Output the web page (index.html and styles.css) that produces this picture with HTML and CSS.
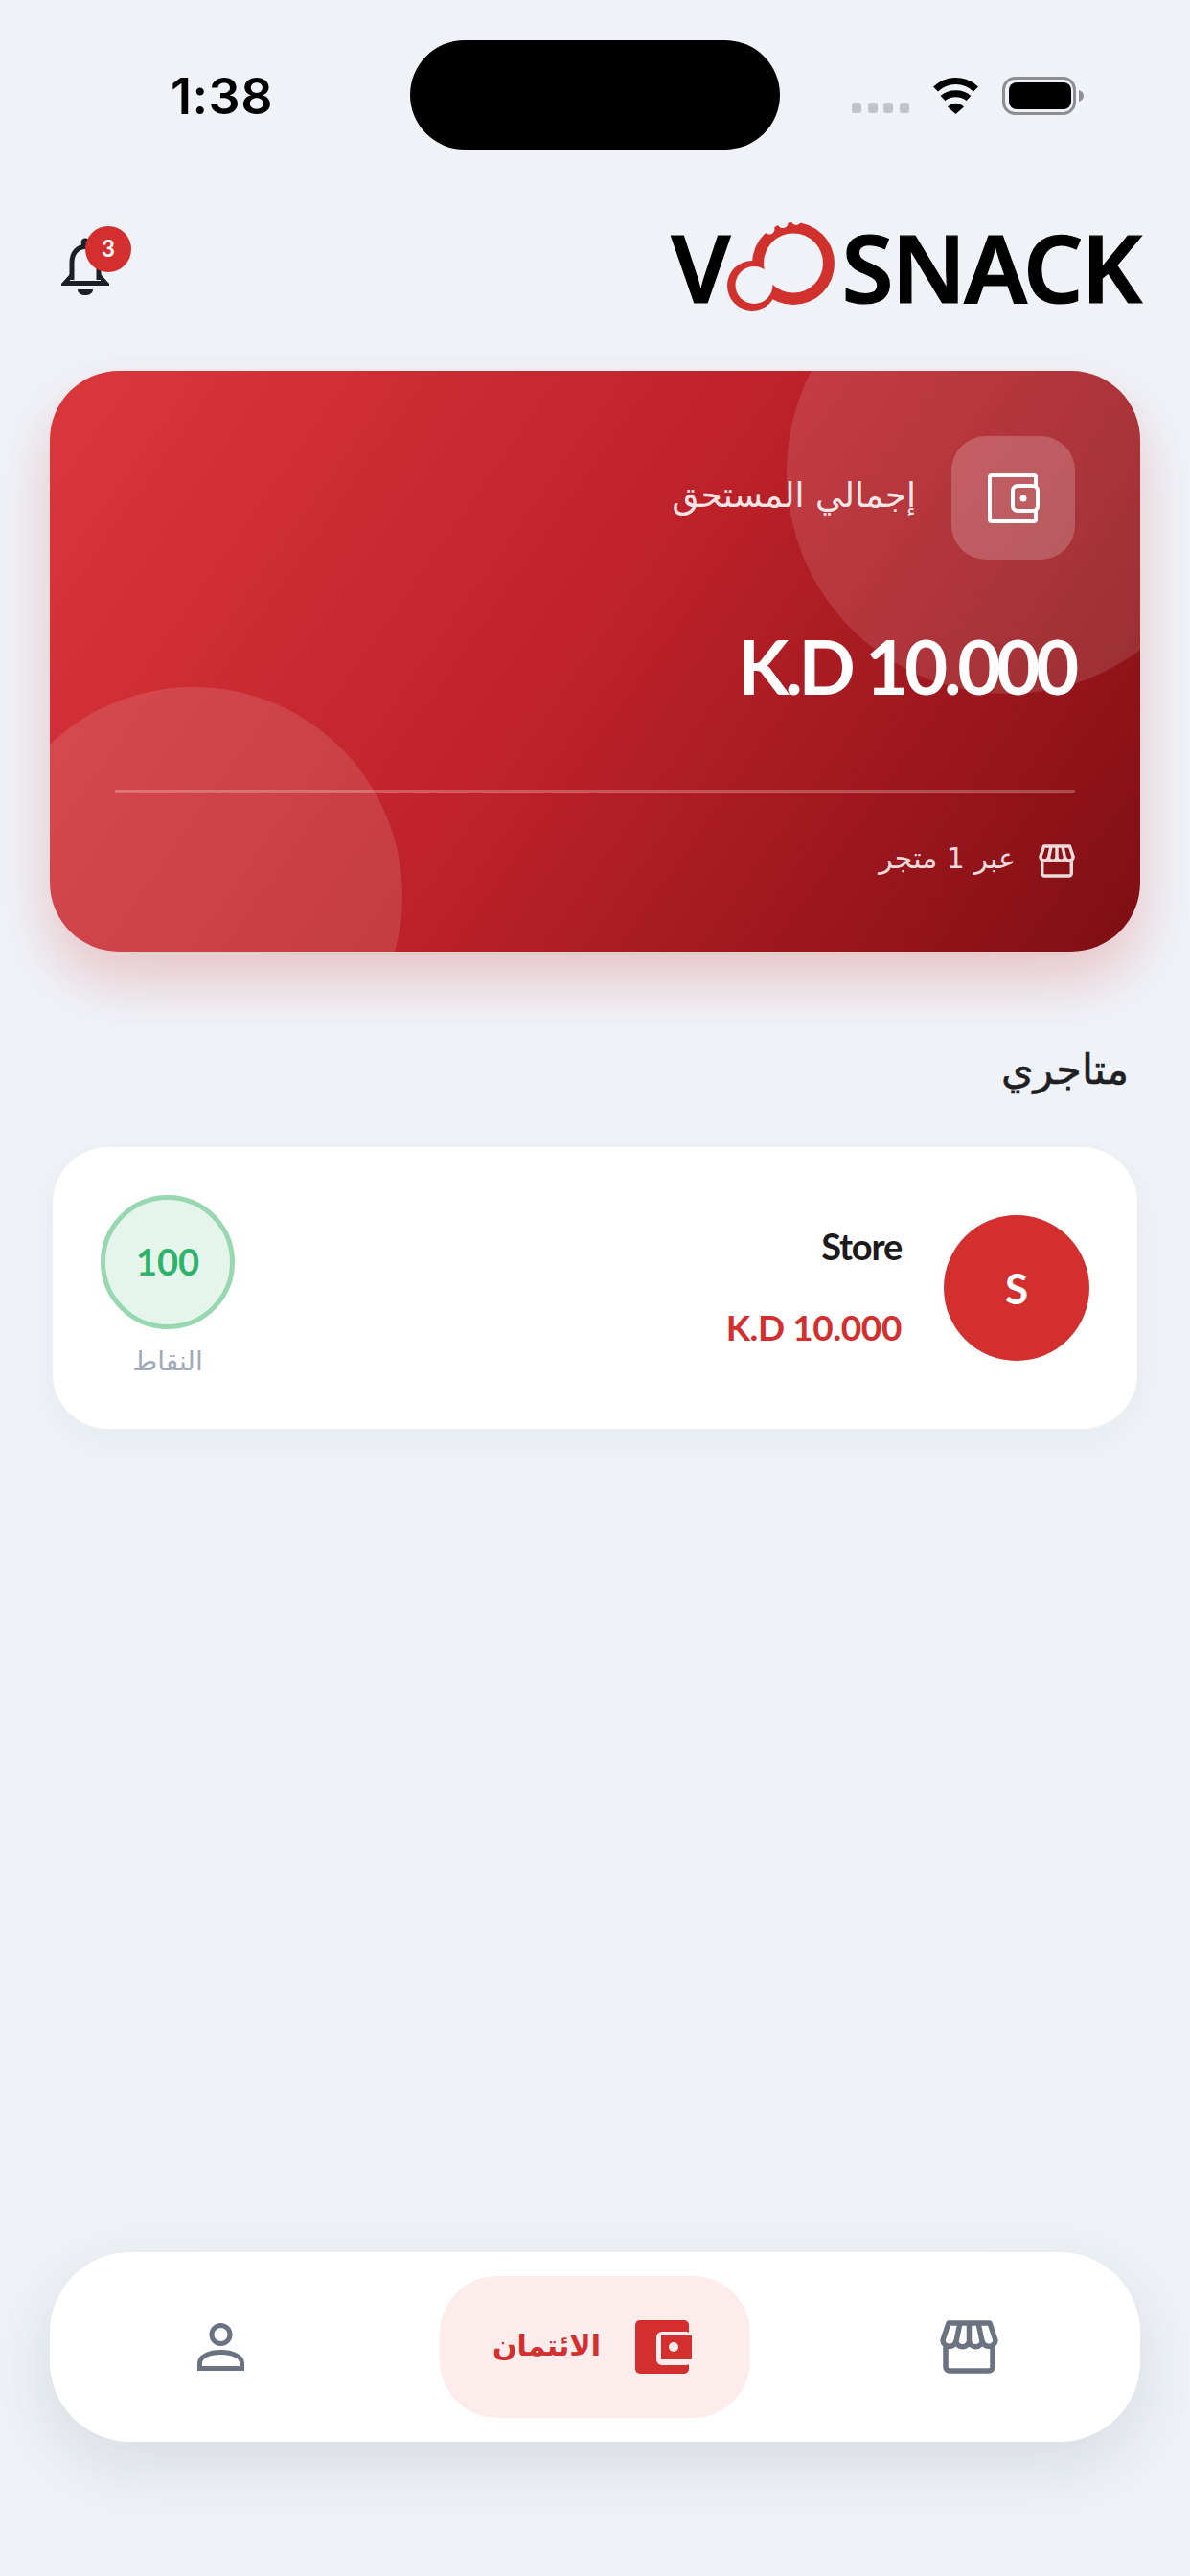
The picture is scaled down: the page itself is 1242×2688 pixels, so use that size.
FILE: index.html
```html
<!DOCTYPE html>
<html lang="ar" dir="rtl">
<head>
  <meta charset="UTF-8" />
  <meta name="viewport" content="width=device-width, initial-scale=1" />
  <title>VOSNACK</title>
  <link rel="stylesheet" href="styles.css">
</head>
<body>

  <svg class="defs" width="0" height="0" aria-hidden="true">
    <symbol id="icon-store" viewBox="0 0 61 56">
      <path d="M3 21 L9 3 H52 L58 21 a7 7 0 0 1 -13.75 1 a7 7 0 0 1 -13.75 0 a7 7 0 0 1 -13.75 0 a7 7 0 0 1 -13.75 -1z M21 3 L17 22 M30.5 3 V22 M40 3 L44 22 M6 27 V49 a4 4 0 0 0 4 4 H51 a4 4 0 0 0 4 -4 V27" fill="none" stroke="currentColor" stroke-width="5.5" stroke-linejoin="round"/>
    </symbol>
  </svg>

  <div class="status" dir="ltr">
    <div class="status-time">1:38</div>
    <div class="status-island"></div>
    <div class="status-icons">
      <div class="signal"><span></span><span></span><span></span><span></span></div>
      <svg class="wifi" width="51" height="39" viewBox="0 0 51 39">
        <path d="M4.5 13 C16 1.5 35 1.5 46.5 13 M12 22.5 C19 16 32 16 39 22.5" fill="none" stroke="#000" stroke-width="7"/>
        <path d="M17 31.5 Q25.5 24 34 31.5 L25.5 39 Z" fill="#000"/>
      </svg>
      <svg class="battery" width="85" height="40" viewBox="0 0 85 40">
        <rect x="1.5" y="1.5" width="74" height="37" rx="12" fill="none" stroke="#8e8e93" stroke-width="3"/>
        <rect x="7" y="6" width="65" height="28" rx="8" fill="#000"/>
        <path d="M80 14 C83 15 85 17 85 20 S83 25 80 26 Z" fill="#8e8e93"/>
      </svg>
    </div>
  </div>

  <header class="top">
    <div class="logo" dir="ltr">
      <span class="logo-v">V</span>
      <svg class="logo-mark" width="114" height="96" viewBox="0 0 114 96">
        <circle cx="71" cy="45" r="43" fill="#d0312d"/>
        <circle cx="28" cy="68" r="26" fill="#d0312d"/>
        <circle cx="71" cy="44.5" r="31" fill="#eff3f8"/>
        <circle cx="30" cy="67.5" r="19.5" fill="#eff3f8"/>
        <circle cx="46" cy="9" r="5.5" fill="#eff3f8"/>
        <circle cx="60" cy="2.5" r="5.5" fill="#eff3f8"/>
        <circle cx="74" cy="0" r="5" fill="#eff3f8"/>
      </svg>
      <span class="logo-text">SNACK</span>
    </div>
    <div class="bell">
      <svg width="50" height="60" viewBox="0 0 50 60">
        <circle cx="25" cy="5" r="4.5" fill="#1b1f26"/>
        <path d="M11 44 V26 C11 16 17 9.5 25 9.5 S39 16 39 26 V44" fill="none" stroke="#1b1f26" stroke-width="5"/>
        <path d="M9 38 L0 48 V50 H50 V48 L41 38 V45 H9 Z" fill="#1b1f26"/>
        <path d="M17 54 H33 C33 58 29 60 25 60 S17 58 17 54 Z" fill="#1b1f26"/>
      </svg>
      <span class="bell-badge">3</span>
    </div>
  </header>

  <section class="total-card">
    <div class="blob blob-top"></div>
    <div class="blob blob-bottom"></div>
    <div class="total-head">
      <div class="total-tile">
        <svg width="54" height="52" viewBox="0 0 54 52">
          <path d="M50 13 V4 a2 2 0 0 0 -2 -2 H4 a2 2 0 0 0 -2 2 V48 a2 2 0 0 0 2 2 H48 a2 2 0 0 0 2 -2 V39" fill="none" stroke="#fff" stroke-width="4"/>
          <rect x="26" y="13" width="26" height="26" rx="5" fill="none" stroke="#fff" stroke-width="4"/>
          <circle cx="37" cy="26" r="3.5" fill="#fff"/>
        </svg>
      </div>
      <div class="total-label">إجمالي المستحق</div>
    </div>
    <div class="total-amount" dir="ltr">K.D 10.000</div>
    <div class="total-line"></div>
    <div class="total-foot">
      <svg width="38" height="35"><use href="#icon-store"/></svg>
      <span>عبر 1 متجر</span>
    </div>
  </section>

  <h2 class="section-title">متاجري</h2>

  <section class="store-card">
    <div class="store-avatar">S</div>
    <div class="store-info">
      <div class="store-name">Store</div>
      <div class="store-due" dir="ltr">K.D 10.000</div>
    </div>
    <div class="points">
      <div class="points-circle">100</div>
      <div class="points-label">النقاط</div>
    </div>
  </section>

  <nav class="nav">
    <svg class="nav-store" width="61" height="56"><use href="#icon-store"/></svg>
    <div class="nav-pill">
      <svg width="59" height="56" viewBox="0 0 59 56">
        <rect width="56" height="56" rx="5" fill="#d32f2f"/>
        <rect x="22" y="12" width="37" height="35" rx="6" fill="#fcecec"/>
        <rect x="27" y="16" width="32" height="25" fill="#d32f2f"/>
        <circle cx="40" cy="28" r="5" fill="#fcecec"/>
      </svg>
      <span>الائتمان</span>
    </div>
    <svg class="nav-person" width="49" height="50" viewBox="0 0 49 50">
      <circle cx="24.5" cy="12" r="9.5" fill="none" stroke="#6b7280" stroke-width="5"/>
      <path d="M2.5 47.5 V42 C2.5 35 12 30.5 24.5 30.5 S46.5 35 46.5 42 V47.5 Z" fill="none" stroke="#6b7280" stroke-width="5"/>
    </svg>
  </nav>

</body>
</html>
```

FILE: styles.css
```css
html, body {
  margin: 0;
  padding: 0;
}
body {
  width: 1242px;
  height: 2688px;
  overflow: hidden;
  display: flex;
  flex-direction: column;
  background: #eff3f8;
  font-family: "DejaVu Sans", sans-serif;
  color: #1f1f24;
}
.defs {
  position: absolute;
}

/* status bar */
.status {
  display: grid;
  grid-template-columns: 428px 386px 1fr;
  align-items: center;
  padding-top: 42px;
}
.status-time {
  padding: 3px 0 0 178px;
  font-family: Inter, sans-serif;
  font-weight: 600;
  font-size: 52px;
  color: #000;
  letter-spacing: 0.5px;
}
.status-island {
  height: 114px;
  border-radius: 57px;
  background: #000;
}
.status-icons {
  display: flex;
  align-items: flex-end;
  padding-left: 75px;
}
.signal {
  display: flex;
  gap: 6.5px;
  margin-bottom: 1px;
}
.signal span {
  width: 10px;
  height: 11px;
  border-radius: 3px;
  background: #c0c4c8;
}
.wifi {
  margin-left: 23px;
}
.battery {
  margin-left: 23px;
  margin-bottom: -1px;
}

/* header */
.top {
  height: 231px;
  display: flex;
  justify-content: space-between;
  align-items: center;
  padding: 12px 52px 0 64px;
  box-sizing: border-box;
}
.logo {
  display: flex;
  align-items: center;
  font-family: "Noto Sans", sans-serif;
  font-weight: 600;
  font-size: 98px;
  line-height: 96px;
  color: #000;
  -webkit-text-stroke: 1.2px #000;
}
.logo-v {
  width: 56px;
}
.logo-text {
  margin-left: 8px;
  letter-spacing: -2px;
}
.bell {
  position: relative;
  width: 50px;
  height: 60px;
}
.bell svg {
  display: block;
}
.bell-badge {
  position: absolute;
  top: -12px;
  left: 25px;
  width: 48px;
  height: 48px;
  border-radius: 50%;
  background: #d32f2f;
  color: #fff;
  font-family: Lato, sans-serif;
  font-weight: 700;
  font-size: 24px;
  line-height: 46px;
  text-align: center;
}

/* total card */
.total-card {
  position: relative;
  overflow: hidden;
  margin: 0 52px;
  height: 606px;
  box-sizing: border-box;
  padding: 68px 68px 0;
  border-radius: 72px;
  background: linear-gradient(125deg, #da383c 0%, #bd2129 50%, #7e0e13 100%);
  color: #fff;
  box-shadow: 0 30px 60px rgba(211, 47, 47, 0.24);
}
.total-card > div:not(.blob) {
  position: relative;
}
.blob {
  position: absolute;
  border-radius: 50%;
  background: rgba(255, 255, 255, 0.12);
}
.blob-top {
  top: -125px;
  right: -93px;
  width: 462px;
  height: 462px;
}
.blob-bottom {
  bottom: -160px;
  left: -68px;
  width: 436px;
  height: 436px;
}
.total-head {
  display: flex;
  align-items: center;
  gap: 37px;
}
.total-tile {
  width: 129px;
  height: 129px;
  border-radius: 36px;
  background: rgba(255, 255, 255, 0.2);
  display: flex;
  align-items: center;
  justify-content: center;
}
.total-label {
  margin-top: -6px;
  font-size: 36px;
  color: rgba(255, 255, 255, 0.9);
}
.total-amount {
  margin-top: 63px;
  font-family: Lato, sans-serif;
  font-weight: 700;
  font-size: 78px;
  line-height: 96px;
  letter-spacing: -4.3px;
  text-align: right;
}
.total-line {
  margin-top: 81px;
  height: 3px;
  background: rgba(255, 255, 255, 0.25);
}
.total-foot {
  margin-top: 54px;
  display: flex;
  align-items: center;
  gap: 24px;
  color: rgba(255, 255, 255, 0.85);
  font-size: 30px;
}
.total-foot span {
  margin-top: -6px;
}

/* stores */
.section-title {
  margin: 93px 64px 49px 0;
  font-size: 43px;
  font-weight: 400;
  line-height: 60px;
  -webkit-text-stroke: 0.6px #1f1f24;
}
.store-card {
  margin: 0 53px;
  height: 298px;
  box-sizing: border-box;
  padding: 0 50px;
  display: flex;
  align-items: center;
  background: #fff;
  border: 2px solid #ebeef3;
  border-radius: 60px;
  box-shadow: 0 12px 36px rgba(30, 40, 70, 0.04);
}
.store-avatar {
  width: 152px;
  height: 152px;
  border-radius: 50%;
  background: #d32f2f;
  color: #fff;
  font-family: Lato, sans-serif;
  font-weight: 700;
  font-size: 44px;
  line-height: 152px;
  text-align: center;
}
.store-info {
  margin-right: 44px;
  margin-bottom: 4px;
  font-family: Lato, sans-serif;
  font-weight: 700;
}
.store-name {
  font-size: 38px;
  line-height: 46px;
  letter-spacing: -1.2px;
  color: #1c1a1c;
  margin-bottom: 40px;
}
.store-due {
  font-size: 37px;
  line-height: 44px;
  letter-spacing: -0.4px;
  color: #d32f2f;
}
.points {
  margin-right: auto;
  width: 140px;
  padding-bottom: 6px;
  text-align: center;
}
.points-circle {
  width: 140px;
  height: 140px;
  box-sizing: border-box;
  border: 5px solid #97d8b0;
  border-radius: 50%;
  background: #e6f5ec;
  color: #2eb46a;
  font-family: Lato, sans-serif;
  font-weight: 700;
  font-size: 38px;
  line-height: 128px;
}
.points-label {
  margin-top: 17px;
  margin-bottom: -3px;
  font-size: 28px;
  line-height: 34px;
  color: #a0a9b8;
}

/* bottom nav */
.nav {
  margin: auto 52px 140px;
  height: 198px;
  box-sizing: border-box;
  padding-right: 148px;
  display: flex;
  align-items: center;
  background: #fff;
  border-radius: 84px;
  box-shadow: 0 24px 70px rgba(40, 50, 70, 0.12);
}
.nav-store {
  color: #6b7280;
}
.nav-pill {
  width: 324px;
  height: 148px;
  box-sizing: border-box;
  margin: 0 198px 0 204px;
  padding: 0 61px 0 30px;
  display: flex;
  align-items: center;
  gap: 36px;
  border-radius: 60px;
  background: #fcecec;
  color: #d32f2f;
  font-size: 30px;
  font-weight: 700;
  white-space: nowrap;
}
.nav-pill svg {
  flex-shrink: 0;
}
.nav-pill span {
  margin-top: -4px;
}
```
